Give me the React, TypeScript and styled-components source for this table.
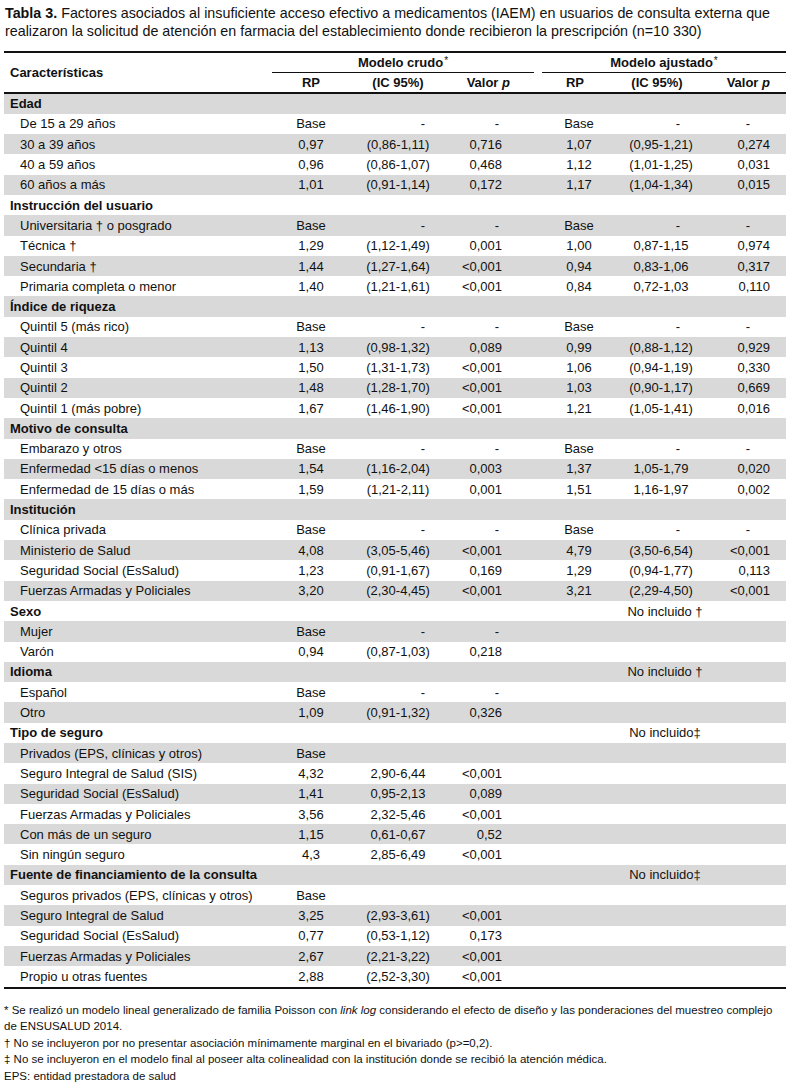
import React from "react";
import styled, { createGlobalStyle } from "styled-components";

const Global = createGlobalStyle`
  html, body { margin: 0; padding: 0; background: #fff; }
  body { font-family: "Liberation Sans", Arial, sans-serif; color: #111; }
`;

const COLS = "268px 78px 96px 88px 8px 74px 90px 80px";

const Page = styled.div`
  width: 790px;
  padding: 4px 4px 0 4px;
  box-sizing: border-box;
`;

const Title = styled.p`
  margin: 0 0 0 1px;
  font-size: 14.3px;
  line-height: 18px;
  white-space: nowrap;
`;

const Table = styled.div`
  margin-top: 11px;
  width: 782px;
  font-size: 13px;
`;

const Head = styled.div`
  display: grid;
  grid-template-columns: ${COLS};
  grid-template-rows: 19.5px 19px;
  border-top: 2.5px solid #111;
  border-bottom: 2.5px solid #111;
  font-weight: bold;
`;

const HeadLabel = styled.div`
  grid-row: 1 / span 2;
  grid-column: 1;
  display: flex;
  align-items: center;
  padding-left: 6px;
`;

const Group = styled.div<{ $col: string }>`
  grid-row: 1;
  grid-column: ${(p) => p.$col};
  display: flex;
  align-items: center;
  justify-content: center;
  border-bottom: 1px solid #111;
`;

const Star = styled.span`
  font-size: 10px;
  font-weight: normal;
  align-self: flex-start;
  margin-top: 2px;
  margin-left: 1px;
`;

const HeadCell = styled.div<{ $col: number; $align?: string; $pr?: number }>`
  grid-row: 2;
  grid-column: ${(p) => p.$col};
  display: flex;
  align-items: center;
  justify-content: ${(p) => (p.$align === "right" ? "flex-end" : "center")};
  padding-right: ${(p) => p.$pr ?? 0}px;
`;

const Row = styled.div`
  display: grid;
  grid-template-columns: ${COLS};
  height: 20.3px;
  align-items: center;
  &:nth-child(odd) { background: #d9d9d9; }
`;

const Label = styled.div<{ $section?: boolean }>`
  padding-left: ${(p) => (p.$section ? 6 : 16)}px;
  font-weight: ${(p) => (p.$section ? "bold" : "normal")};
  white-space: nowrap;
`;

const Cell = styled.div<{ $col: number; $align: string; $pr: number }>`
  grid-column: ${(p) => p.$col};
  text-align: ${(p) => p.$align};
  padding-right: ${(p) => p.$pr}px;
  white-space: nowrap;
`;

const Note = styled.div`
  grid-column: 6 / span 3;
  text-align: center;
  padding-left: 2px;
  white-space: nowrap;
`;

const Body = styled.div`
  border-bottom: 2.5px solid #111;
`;

const Notes = styled.div`
  margin-top: 13px;
  font-size: 11.5px;
  line-height: 16.5px;
`;

const NoteLine = styled.p`
  margin: 0;
`;

type Item = { label: string; c?: string[]; a?: string[] };
type Section = { title: string; note?: string; items: Item[] };

const B = ["Base", "-", "-"];

const data: Section[] = [
  {
    title: "Edad",
    items: [
      { label: "De 15 a 29 años", c: B, a: B },
      { label: "30 a 39 años", c: ["0,97", "(0,86-1,11)", "0,716"], a: ["1,07", "(0,95-1,21)", "0,274"] },
      { label: "40 a 59 años", c: ["0,96", "(0,86-1,07)", "0,468"], a: ["1,12", "(1,01-1,25)", "0,031"] },
      { label: "60 años a más", c: ["1,01", "(0,91-1,14)", "0,172"], a: ["1,17", "(1,04-1,34)", "0,015"] },
    ],
  },
  {
    title: "Instrucción del usuario",
    items: [
      { label: "Universitaria † o posgrado", c: B, a: B },
      { label: "Técnica †", c: ["1,29", "(1,12-1,49)", "0,001"], a: ["1,00", "0,87-1,15", "0,974"] },
      { label: "Secundaria †", c: ["1,44", "(1,27-1,64)", "<0,001"], a: ["0,94", "0,83-1,06", "0,317"] },
      { label: "Primaria completa o menor", c: ["1,40", "(1,21-1,61)", "<0,001"], a: ["0,84", "0,72-1,03", "0,110"] },
    ],
  },
  {
    title: "Índice de riqueza",
    items: [
      { label: "Quintil 5 (más rico)", c: B, a: B },
      { label: "Quintil 4", c: ["1,13", "(0,98-1,32)", "0,089"], a: ["0,99", "(0,88-1,12)", "0,929"] },
      { label: "Quintil 3", c: ["1,50", "(1,31-1,73)", "<0,001"], a: ["1,06", "(0,94-1,19)", "0,330"] },
      { label: "Quintil 2", c: ["1,48", "(1,28-1,70)", "<0,001"], a: ["1,03", "(0,90-1,17)", "0,669"] },
      { label: "Quintil 1 (más pobre)", c: ["1,67", "(1,46-1,90)", "<0,001"], a: ["1,21", "(1,05-1,41)", "0,016"] },
    ],
  },
  {
    title: "Motivo de consulta",
    items: [
      { label: "Embarazo y otros", c: B, a: B },
      { label: "Enfermedad <15 días o menos", c: ["1,54", "(1,16-2,04)", "0,003"], a: ["1,37", "1,05-1,79", "0,020"] },
      { label: "Enfermedad de 15 días o más", c: ["1,59", "(1,21-2,11)", "0,001"], a: ["1,51", "1,16-1,97", "0,002"] },
    ],
  },
  {
    title: "Institución",
    items: [
      { label: "Clínica privada", c: B, a: B },
      { label: "Ministerio de Salud", c: ["4,08", "(3,05-5,46)", "<0,001"], a: ["4,79", "(3,50-6,54)", "<0,001"] },
      { label: "Seguridad Social (EsSalud)", c: ["1,23", "(0,91-1,67)", "0,169"], a: ["1,29", "(0,94-1,77)", "0,113"] },
      { label: "Fuerzas Armadas y Policiales", c: ["3,20", "(2,30-4,45)", "<0,001"], a: ["3,21", "(2,29-4,50)", "<0,001"] },
    ],
  },
  {
    title: "Sexo",
    note: "No incluido †",
    items: [
      { label: "Mujer", c: B },
      { label: "Varón", c: ["0,94", "(0,87-1,03)", "0,218"] },
    ],
  },
  {
    title: "Idioma",
    note: "No incluido †",
    items: [
      { label: "Español", c: B },
      { label: "Otro", c: ["1,09", "(0,91-1,32)", "0,326"] },
    ],
  },
  {
    title: "Tipo de seguro",
    note: "No incluido‡",
    items: [
      { label: "Privados (EPS, clínicas y otros)", c: ["Base", "", ""] },
      { label: "Seguro Integral de Salud (SIS)", c: ["4,32", "2,90-6,44", "<0,001"] },
      { label: "Seguridad Social (EsSalud)", c: ["1,41", "0,95-2,13", "0,089"] },
      { label: "Fuerzas Armadas y Policiales", c: ["3,56", "2,32-5,46", "<0,001"] },
      { label: "Con más de un seguro", c: ["1,15", "0,61-0,67", "0,52"] },
      { label: "Sin ningún seguro", c: ["4,3", "2,85-6,49", "<0,001"] },
    ],
  },
  {
    title: "Fuente de financiamiento de la consulta",
    note: "No incluido‡",
    items: [
      { label: "Seguros privados (EPS, clínicas y otros)", c: ["Base", "", ""] },
      { label: "Seguro Integral de Salud", c: ["3,25", "(2,93-3,61)", "<0,001"] },
      { label: "Seguridad Social (EsSalud)", c: ["0,77", "(0,53-1,12)", "0,173"] },
      { label: "Fuerzas Armadas y Policiales", c: ["2,67", "(2,21-3,22)", "<0,001"] },
      { label: "Propio u otras fuentes", c: ["2,88", "(2,52-3,30)", "<0,001"] },
    ],
  },
];

// column layout: [gridColumn, align, paddingRight, dashPaddingRight]
const crudoCols: [number, string, number, number][] = [
  [2, "center", 0, 0],
  [3, "center", 0, 21],
  [4, "right", 32, 35],
];
const ajustCols: [number, string, number, number][] = [
  [6, "center", 0, 0],
  [7, "center", 0, 26],
  [8, "right", 16, 36],
];

function Cells({ vals, cols }: { vals?: string[]; cols: [number, string, number, number][] }) {
  if (!vals) return null;
  return (
    <>
      {vals.map((v, i) => {
        const [col, align, pr, dpr] = cols[i];
        const dash = v === "-";
        return (
          <Cell key={i} $col={col} $align={dash ? "right" : align} $pr={dash ? dpr : pr}>
            {v}
          </Cell>
        );
      })}
    </>
  );
}

export default function App() {
  const rows: React.ReactNode[] = [];
  data.forEach((s, si) => {
    rows.push(
      <Row key={`s${si}`}>
        <Label $section>{s.title}</Label>
        {s.note && <Note>{s.note}</Note>}
      </Row>
    );
    s.items.forEach((it, ii) => {
      rows.push(
        <Row key={`s${si}i${ii}`}>
          <Label>{it.label}</Label>
          <Cells vals={it.c} cols={crudoCols} />
          <Cells vals={it.a} cols={ajustCols} />
        </Row>
      );
    });
  });

  return (
    <Page>
      <Global />
      <Title>
        <b>Tabla 3.</b> Factores asociados al insuficiente acceso efectivo a medicamentos (IAEM) en usuarios de consulta externa que
        <br />
        realizaron la solicitud de atención en farmacia del establecimiento donde recibieron la prescripción (n=10 330)
      </Title>
      <Table>
        <Head>
          <HeadLabel>Características</HeadLabel>
          <Group $col="2 / span 3">
            Modelo crudo<Star>*</Star>
          </Group>
          <Group $col="6 / span 3">
            Modelo ajustado<Star>*</Star>
          </Group>
          <HeadCell $col={2}>RP</HeadCell>
          <HeadCell $col={3}>(IC 95%)</HeadCell>
          <HeadCell $col={4} $align="right" $pr={24}>
            Valor&nbsp;<i>p</i>
          </HeadCell>
          <HeadCell $col={6} $pr={8}>RP</HeadCell>
          <HeadCell $col={7} $pr={8}>(IC 95%)</HeadCell>
          <HeadCell $col={8} $align="right" $pr={16}>
            Valor&nbsp;<i>p</i>
          </HeadCell>
        </Head>
        <Body>{rows}</Body>
      </Table>
      <Notes>
        <NoteLine>
          * Se realizó un modelo lineal generalizado de familia Poisson con <i>link log</i> considerando el efecto de diseño y las ponderaciones del muestreo complejo de ENSUSALUD 2014.
        </NoteLine>
        <NoteLine>† No se incluyeron por no presentar asociación mínimamente marginal en el bivariado (p&gt;=0,2).</NoteLine>
        <NoteLine>‡ No se incluyeron en el modelo final al poseer alta colinealidad con la institución donde se recibió la atención médica.</NoteLine>
        <NoteLine>EPS: entidad prestadora de salud</NoteLine>
      </Notes>
    </Page>
  );
}
